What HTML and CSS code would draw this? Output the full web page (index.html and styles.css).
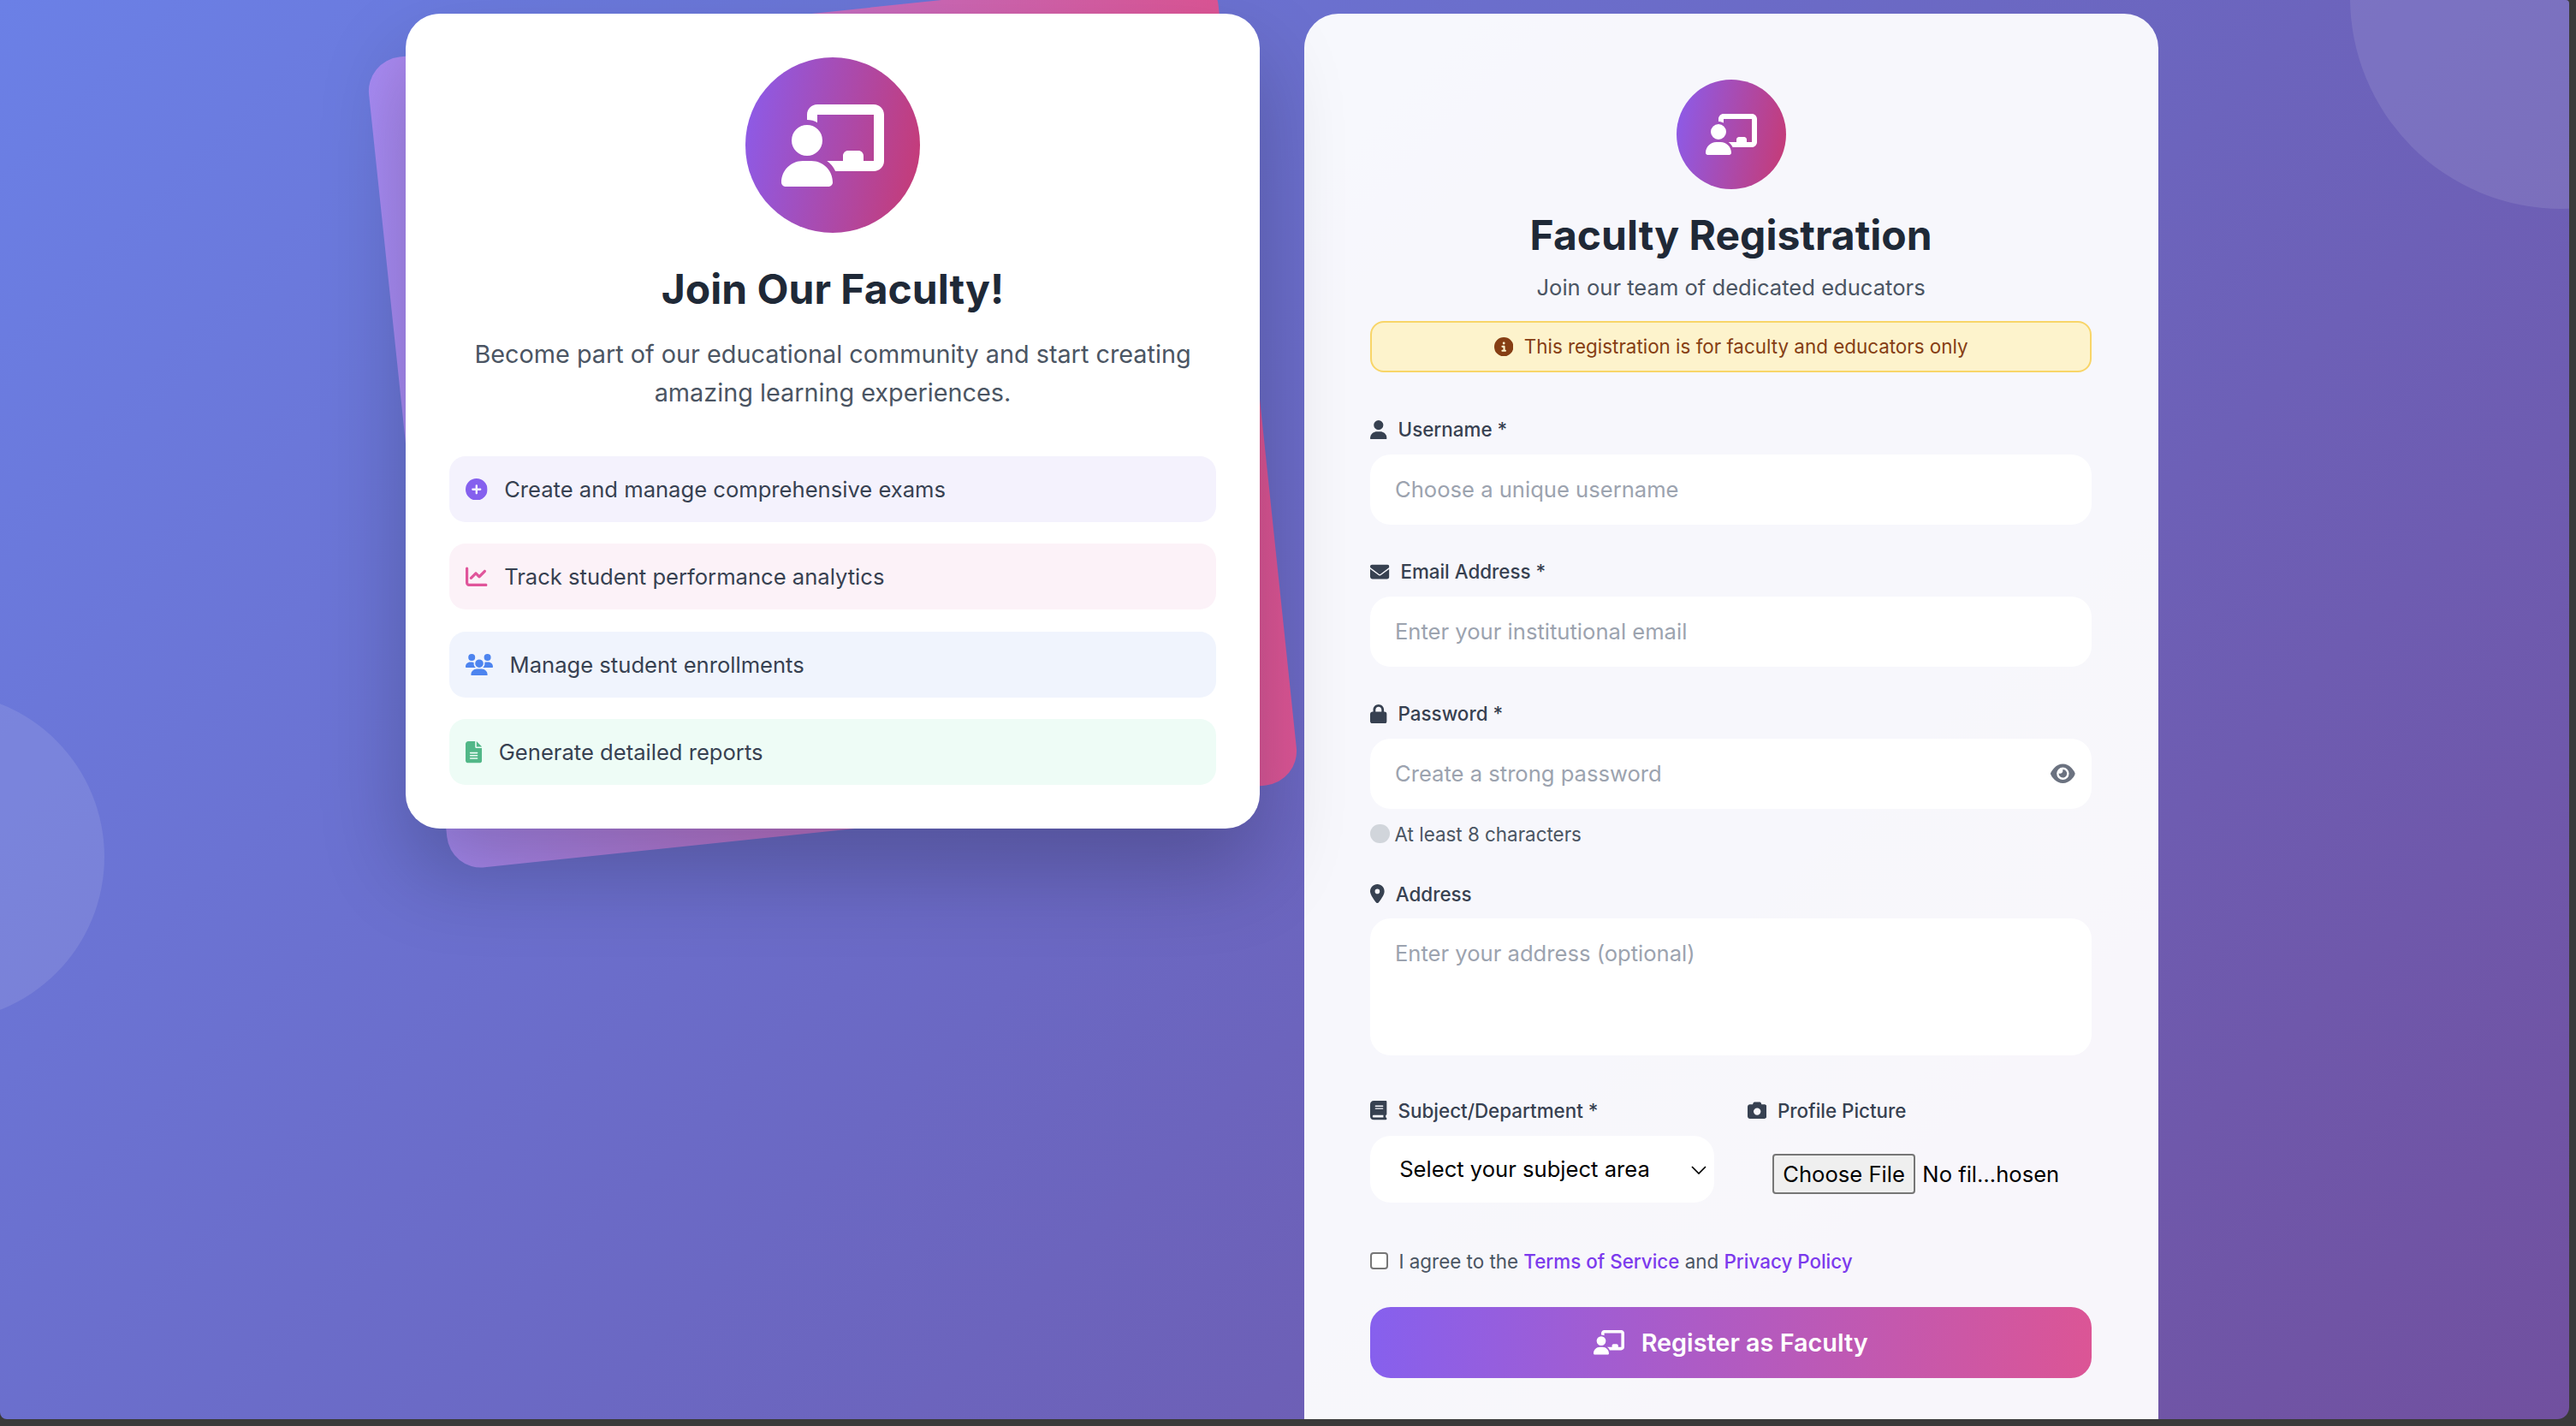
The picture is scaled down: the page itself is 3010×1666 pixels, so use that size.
FILE: index.html
```html
<!DOCTYPE html>
<html lang="en">
<head>
<meta charset="utf-8">
<title>Faculty Registration</title>
<link rel="stylesheet" href="styles.css">
</head>
<body>
<svg class="defs" aria-hidden="true">
  <symbol id="i-teacher" viewBox="0 0 640 512"><path d="M160 64c0-35.3 28.7-64 64-64H576c35.3 0 64 28.7 64 64V352c0 35.3-28.7 64-64 64H336.8c-11.8-25.5-29.9-47.5-52.4-64H384V320c0-17.7 14.3-32 32-32h64c17.7 0 32 14.3 32 32v32h64V64L224 64v49.1C205.2 102.2 183.3 96 160 96V64zm0 256a96 96 0 1 0 0-192 96 96 0 1 0 0 192zm-26.7 32C59.7 352 0 411.7 0 485.3C0 500.1 11.9 512 26.7 512H293.3c14.7 0 26.7-11.9 26.7-26.7C320 411.7 260.3 352 186.7 352H133.3z"/></symbol>
  <symbol id="i-plus" viewBox="0 0 512 512"><path d="M256 512A256 256 0 1 0 256 0a256 256 0 1 0 0 512zM232 344V280H168c-13.3 0-24-10.7-24-24s10.7-24 24-24h64V168c0-13.3 10.7-24 24-24s24 10.7 24 24v64h64c13.3 0 24 10.7 24 24s-10.7 24-24 24H280v64c0 13.3-10.7 24-24 24s-24-10.7-24-24z"/></symbol>
  <symbol id="i-chart" viewBox="0 0 512 512"><path d="M64 64c0-17.7-14.3-32-32-32S0 46.3 0 64V400c0 44.2 35.8 80 80 80H480c17.7 0 32-14.3 32-32s-14.3-32-32-32H80c-8.8 0-16-7.2-16-16V64zm406.6 86.6c12.5-12.5 12.5-32.8 0-45.3s-32.8-12.5-45.3 0L320 210.7l-57.4-57.4c-12.5-12.5-32.8-12.5-45.3 0l-112 112c-12.5 12.5-12.5 32.8 0 45.3s32.8 12.5 45.3 0L240 221.3l57.4 57.4c12.5 12.5 32.8 12.5 45.3 0l128-128z"/></symbol>
  <symbol id="i-users" viewBox="0 0 640 512"><path d="M144 0a80 80 0 1 1 0 160A80 80 0 1 1 144 0zM512 0a80 80 0 1 1 0 160A80 80 0 1 1 512 0zM0 298.7C0 239.8 47.8 192 106.7 192h42.7c15.9 0 31 3.5 44.6 9.7c-1.3 7.2-1.9 14.7-1.9 22.3c0 38.2 16.8 72.5 43.3 96c-.2 0-.4 0-.7 0H21.3C9.6 320 0 310.4 0 298.7zM405.3 320c-.2 0-.4 0-.7 0c26.6-23.5 43.3-57.8 43.3-96c0-7.6-.7-15-1.9-22.3c13.6-6.3 28.7-9.7 44.6-9.7h42.7C592.2 192 640 239.8 640 298.7c0 11.8-9.6 21.3-21.3 21.3H405.3zM224 224a96 96 0 1 1 192 0 96 96 0 1 1 -192 0zM128 485.3C128 411.7 187.7 352 261.3 352H378.7C452.3 352 512 411.7 512 485.3c0 14.7-11.9 26.7-26.7 26.7H154.7c-14.7 0-26.7-11.9-26.7-26.7z"/></symbol>
  <symbol id="i-file" viewBox="0 0 384 512"><path d="M64 0C28.7 0 0 28.7 0 64V448c0 35.3 28.7 64 64 64H320c35.3 0 64-28.7 64-64V160H256c-17.7 0-32-14.3-32-32V0H64zM256 0V128H384L256 0zM112 256H272c8.8 0 16 7.2 16 16s-7.2 16-16 16H112c-8.8 0-16-7.2-16-16s7.2-16 16-16zm0 64H272c8.8 0 16 7.2 16 16s-7.2 16-16 16H112c-8.8 0-16-7.2-16-16s7.2-16 16-16zm0 64H272c8.8 0 16 7.2 16 16s-7.2 16-16 16H112c-8.8 0-16-7.2-16-16s7.2-16 16-16z"/></symbol>
  <symbol id="i-info" viewBox="0 0 512 512"><path d="M256 512A256 256 0 1 0 256 0a256 256 0 1 0 0 512zM216 336h24V272H216c-13.3 0-24-10.7-24-24s10.7-24 24-24h48c13.3 0 24 10.7 24 24v88h8c13.3 0 24 10.7 24 24s-10.7 24-24 24H216c-13.3 0-24-10.7-24-24s10.7-24 24-24zm40-208a32 32 0 1 1 0 64 32 32 0 1 1 0-64z"/></symbol>
  <symbol id="i-user" viewBox="0 0 448 512"><path d="M224 256A128 128 0 1 0 224 0a128 128 0 1 0 0 256zm-45.7 48C79.8 304 0 383.8 0 482.3C0 498.7 13.3 512 29.7 512H418.3c16.4 0 29.7-13.3 29.7-29.7C448 383.8 368.2 304 269.7 304H178.3z"/></symbol>
  <symbol id="i-mail" viewBox="0 0 512 512"><path d="M48 64C21.5 64 0 85.5 0 112c0 15.1 7.1 29.3 19.2 38.4L236.8 313.6c11.4 8.5 27 8.5 38.4 0L492.8 150.4c12.1-9.1 19.2-23.3 19.2-38.4c0-26.5-21.5-48-48-48H48zM0 176V384c0 35.3 28.7 64 64 64H448c35.3 0 64-28.7 64-64V176L294.4 339.2c-22.8 17.1-54 17.1-76.8 0L0 176z"/></symbol>
  <symbol id="i-lock" viewBox="0 0 448 512"><path d="M144 144v48H304V144c0-44.2-35.8-80-80-80s-80 35.8-80 80zM80 192V144C80 64.5 144.5 0 224 0s144 64.5 144 144v48h16c35.3 0 64 28.7 64 64V448c0 35.3-28.7 64-64 64H64c-35.3 0-64-28.7-64-64V256c0-35.3 28.7-64 64-64H80z"/></symbol>
  <symbol id="i-eye" viewBox="0 0 576 512"><path d="M288 32c-80.8 0-145.5 36.8-192.6 80.6C48.6 156 17.3 208 2.5 243.7c-3.3 7.9-3.3 16.7 0 24.6C17.3 304 48.6 356 95.4 399.4C142.5 443.2 207.2 480 288 480s145.5-36.8 192.6-80.6c46.8-43.5 78.1-95.4 93-131.1c3.3-7.9 3.3-16.7 0-24.6c-14.9-35.7-46.2-87.7-93-131.1C433.5 68.8 368.8 32 288 32zM144 256a144 144 0 1 1 288 0 144 144 0 1 1 -288 0zm144-64c0 35.3-28.7 64-64 64c-7.1 0-13.9-1.2-20.3-3.3c-5.5-1.8-11.9 1.6-11.7 7.4c.3 6.9 1.3 13.8 3.2 20.7c13.7 51.2 66.4 81.6 117.6 67.9s81.6-66.4 67.9-117.6c-11.1-41.5-47.8-69.4-88.6-71.1c-5.8-.2-9.2 6.1-7.4 11.7c2.1 6.4 3.3 13.2 3.3 20.3z"/></symbol>
  <symbol id="i-pin" viewBox="0 0 384 512"><path d="M215.7 499.2C267 435 384 279.4 384 192C384 86 298 0 192 0S0 86 0 192c0 87.4 117 243 168.3 307.2c12.3 15.3 35.1 15.3 47.4 0zM192 128a64 64 0 1 1 0 128 64 64 0 1 1 0-128z"/></symbol>
  <symbol id="i-book" viewBox="0 0 448 512"><path d="M96 0C43 0 0 43 0 96V416c0 53 43 96 96 96H384h32c17.7 0 32-14.3 32-32s-14.3-32-32-32V384c17.7 0 32-14.3 32-32V32c0-17.7-14.3-32-32-32H384 96zm0 384H352v64H96c-17.7 0-32-14.3-32-32s14.3-32 32-32zm32-240c0-8.8 7.2-16 16-16H336c8.8 0 16 7.2 16 16s-7.2 16-16 16H144c-8.8 0-16-7.2-16-16zm16 48H336c8.8 0 16 7.2 16 16s-7.2 16-16 16H144c-8.8 0-16-7.2-16-16s7.2-16 16-16z"/></symbol>
  <symbol id="i-camera" viewBox="0 0 512 512"><path d="M149.1 64.8L138.7 96H64C28.7 96 0 124.7 0 160V416c0 35.3 28.7 64 64 64H448c35.3 0 64-28.7 64-64V160c0-35.3-28.7-64-64-64H373.3L362.9 64.8C356.4 45.2 338.1 32 317.4 32H194.6c-20.7 0-39 13.2-45.5 32.8zM256 192a96 96 0 1 1 0 192 96 96 0 1 1 0-192z"/></symbol>
</svg>

<div class="page">
  <div class="bubble bubble-top"></div>
  <div class="bubble bubble-left"></div>

  <main class="columns">
    <section class="welcome">
      <div class="welcome-card">
        <div class="badge badge-large"><svg class="ic w640"><use href="#i-teacher"/></svg></div>
        <h2 class="welcome-title">Join Our Faculty!</h2>
        <p class="welcome-text">Become part of our educational community and start creating amazing learning experiences.</p>
        <ul class="features">
          <li class="feature feature-purple"><svg class="ic w512"><use href="#i-plus"/></svg><span>Create and manage comprehensive exams</span></li>
          <li class="feature feature-pink"><svg class="ic w512"><use href="#i-chart"/></svg><span>Track student performance analytics</span></li>
          <li class="feature feature-blue"><svg class="ic w640"><use href="#i-users"/></svg><span>Manage student enrollments</span></li>
          <li class="feature feature-green"><svg class="ic w384"><use href="#i-file"/></svg><span>Generate detailed reports</span></li>
        </ul>
      </div>
    </section>

    <section class="register">
      <div class="badge badge-small"><svg class="ic w640"><use href="#i-teacher"/></svg></div>
      <h1 class="register-title">Faculty Registration</h1>
      <p class="register-sub">Join our team of dedicated educators</p>
      <div class="notice"><svg class="ic w512"><use href="#i-info"/></svg><span>This registration is for faculty and educators only</span></div>

      <form class="form">
        <div class="field">
          <label class="label" for="username"><svg class="ic w448"><use href="#i-user"/></svg>Username *</label>
          <input class="control" id="username" type="text" placeholder="Choose a unique username">
        </div>
        <div class="field">
          <label class="label" for="email"><svg class="ic w512"><use href="#i-mail"/></svg>Email Address *</label>
          <input class="control" id="email" type="email" placeholder="Enter your institutional email">
        </div>
        <div class="field field-password">
          <label class="label" for="password"><svg class="ic w448"><use href="#i-lock"/></svg>Password *</label>
          <div class="password-wrap">
            <input class="control" id="password" type="password" placeholder="Create a strong password">
            <svg class="ic w576 eye"><use href="#i-eye"/></svg>
          </div>
          <div class="hint"><span class="hint-dot"></span><span>At least 8 characters</span></div>
        </div>
        <div class="field field-address">
          <label class="label" for="address"><svg class="ic w384"><use href="#i-pin"/></svg>Address</label>
          <textarea class="control area" id="address" placeholder="Enter your address (optional)"></textarea>
        </div>
        <div class="field-row">
          <div class="field-cell">
            <label class="label" for="subject"><svg class="ic w448"><use href="#i-book"/></svg>Subject/Department *</label>
            <div class="select-wrap">
              <select class="select" id="subject"><option>Select your subject area</option></select>
              <svg class="chevron" viewBox="0 0 18 10"><path d="M1 1l8 8 8-8"/></svg>
            </div>
          </div>
          <div class="field-cell">
            <label class="label" for="photo"><svg class="ic w512"><use href="#i-camera"/></svg>Profile Picture</label>
            <input class="file" id="photo" type="file">
          </div>
        </div>
        <label class="terms"><input class="check" type="checkbox"><span>I agree to the <a href="#">Terms of Service</a> and <a href="#">Privacy Policy</a></span></label>
        <button class="submit" type="button"><svg class="ic w640"><use href="#i-teacher"/></svg>Register as Faculty</button>
      </form>
    </section>
  </main>
</div>
</body>
</html>
```
FILE: styles.css
```css
* { box-sizing: border-box; }

html, body { height: 100%; }

body {
  margin: 0;
  background: #3a3a3a;
  font-family: "Inter", "Liberation Sans", sans-serif;
  color: #374151;
  overflow: hidden;
}

.defs { position: absolute; width: 0; height: 0; }

.ic {
  height: 1em;
  flex: none;
  fill: currentColor;
  display: block;
}
.w384 { width: .75em; }
.w448 { width: .875em; }
.w512 { width: 1em; }
.w576 { width: 1.125em; }
.w640 { width: 1.25em; }

.page {
  position: relative;
  width: 3002px;
  height: 1658px;
  overflow: hidden;
  border-radius: 0 4px 14px 8px;
  background: linear-gradient(135deg, #6b80e6 0%, #6b68c3 50%, #71509f 100%);
}

.bubble {
  position: absolute;
  border-radius: 50%;
  background: rgba(255, 255, 255, .1);
}
.bubble-top { width: 494px; height: 494px; left: 2746px; top: -250px; }
.bubble-left { width: 384px; height: 384px; left: -262px; top: 809px; }

.columns {
  position: relative;
  display: flex;
  align-items: flex-start;
  gap: 52px;
  padding: 16px 0 0 474px;
}

.welcome { width: 998px; position: relative; }
.welcome::before {
  content: "";
  position: absolute;
  inset: 0;
  border-radius: 40px;
  background: linear-gradient(90deg, #a78bf4 0%, #dc5595 100%);
  transform: rotate(-6deg);
}
.welcome-card {
  position: relative;
  padding: 51.2px;
  background: #fff;
  border-radius: 40px;
  box-shadow: 0 50px 100px rgba(0, 0, 0, .22);
}

.badge {
  display: flex;
  align-items: center;
  justify-content: center;
  margin: 0 auto;
  border-radius: 50%;
  color: #fff;
  background: linear-gradient(100deg, #8a5ced 0%, #c83a72 100%);
}
.badge-large { width: 204.8px; height: 204.8px; font-size: 96px; }
.badge-small { width: 128px; height: 128px; font-size: 48px; }

.welcome-title {
  margin: 35.5px 0 24px;
  font-size: 48px;
  line-height: 61px;
  font-weight: 700;
  text-align: center;
  color: #1f2937;
}
.welcome-text {
  margin: 0 0 51px;
  font-size: 28.8px;
  line-height: 44.8px;
  text-align: center;
  color: #4b5563;
}

.features {
  list-style: none;
  margin: 0;
  padding: 0;
  display: flex;
  flex-direction: column;
  gap: 25.4px;
}
.feature {
  display: flex;
  align-items: center;
  gap: 19.2px;
  height: 77px;
  padding: 0 19.2px;
  border-radius: 19px;
  font-size: 25.6px;
  color: #374151;
}
.feature .ic { font-size: 25.6px; }
.feature-purple { background: #f4f2fd; }
.feature-purple .ic { color: #8560ee; }
.feature-pink { background: #fcf2f8; }
.feature-pink .ic { color: #e0559b; }
.feature-blue { background: #f0f4fd; }
.feature-blue .ic { color: #4d84ef; }
.feature-green { background: #eefcf6; }
.feature-green .ic { color: #52b788; }

.register {
  width: 998px;
  height: 1700px;
  padding: 76.8px 78px 0 77.2px;
  background: rgba(255, 255, 255, .95);
  border-radius: 40px;
}

.register-title {
  margin: 25px 0 12px;
  font-size: 48px;
  line-height: 58px;
  font-weight: 700;
  text-align: center;
  color: #1f2937;
}
.register-sub {
  margin: 0 0 19px;
  font-size: 25.6px;
  line-height: 40px;
  text-align: center;
  color: #4b5563;
}

.notice {
  display: flex;
  align-items: center;
  justify-content: center;
  gap: 12.8px;
  height: 60px;
  border: 2px solid #f8d568;
  border-radius: 16px;
  background: #fdf3cc;
  color: #863e14;
  font-size: 22.4px;
}
.notice .ic { font-size: 22.4px; }

.form { margin-top: 52.5px; }

.field { margin-bottom: 40px; }
.field-address { margin-bottom: 50px; }

.label {
  display: flex;
  align-items: center;
  gap: 12.8px;
  height: 29px;
  margin-bottom: 14.4px;
  font-size: 22.4px;
  font-weight: 500;
  color: #374151;
}
.label .ic { font-size: 22.4px; }

.control {
  display: block;
  width: 100%;
  height: 82.6px;
  padding: 0 28.8px;
  border: 0;
  border-radius: 24px;
  background: #fff;
  font-family: inherit;
  font-size: 25.6px;
  color: #374151;
  outline: none;
}
.control::placeholder { color: #9ca3af; opacity: 1; }

.area {
  height: 160px;
  padding: 25px 28.8px;
  resize: none;
}

.password-wrap { position: relative; }
.eye {
  position: absolute;
  right: 19px;
  top: 28.5px;
  font-size: 25.6px;
  color: #6b7280;
}

.field-password { margin-bottom: 41px; }
.hint {
  display: flex;
  align-items: center;
  gap: 6px;
  margin-top: 14.5px;
  height: 29px;
  font-size: 22.4px;
  color: #4b5563;
}
.hint-dot {
  width: 22.4px;
  height: 22.4px;
  border-radius: 50%;
  background: #d1d5db;
}

.field-row {
  display: grid;
  grid-template-columns: 1fr 1fr;
  gap: 38.4px;
}

.select-wrap { position: relative; }
.select {
  display: block;
  width: 100%;
  height: 78px;
  padding: 0 34px;
  border: 0;
  border-radius: 24px;
  background: #fff;
  appearance: none;
  font-family: inherit;
  font-size: 25.6px;
  color: #000;
}
.chevron {
  position: absolute;
  right: 9px;
  top: 35px;
  width: 18px;
  height: 10px;
  fill: none;
  stroke: #000;
  stroke-width: 1.7;
}

.file {
  display: block;
  width: 336px;
  margin: 36px 0 0 29px;
  font-family: inherit;
  font-size: 25.6px;
  color: #000;
}
.file::file-selector-button {
  height: 47px;
  margin-right: 8px;
  padding: 0 10.5px;
  border: 2px solid #767676;
  border-radius: 4px;
  background: #efefef;
  font: inherit;
  color: #000;
}

.terms {
  display: flex;
  align-items: center;
  gap: 12.8px;
  height: 29px;
  margin-top: 54px;
  font-size: 22.4px;
  color: #4b5563;
}
.terms a {
  color: #7c3aed;
  font-weight: 500;
  text-decoration: none;
}
.check {
  appearance: none;
  width: 20.5px;
  height: 20.5px;
  margin: 0;
  border: 2px solid #767676;
  border-radius: 4px;
  background: #fff;
}

.submit {
  display: flex;
  align-items: center;
  justify-content: center;
  gap: 19.2px;
  width: 100%;
  height: 83px;
  margin-top: 39.5px;
  border: 0;
  border-radius: 24px;
  background: linear-gradient(95deg, #8660ee 0%, #dc5595 100%);
  color: #fff;
  font-family: inherit;
  font-size: 28.8px;
  font-weight: 600;
}
.submit .ic { font-size: 28.8px; }
```
